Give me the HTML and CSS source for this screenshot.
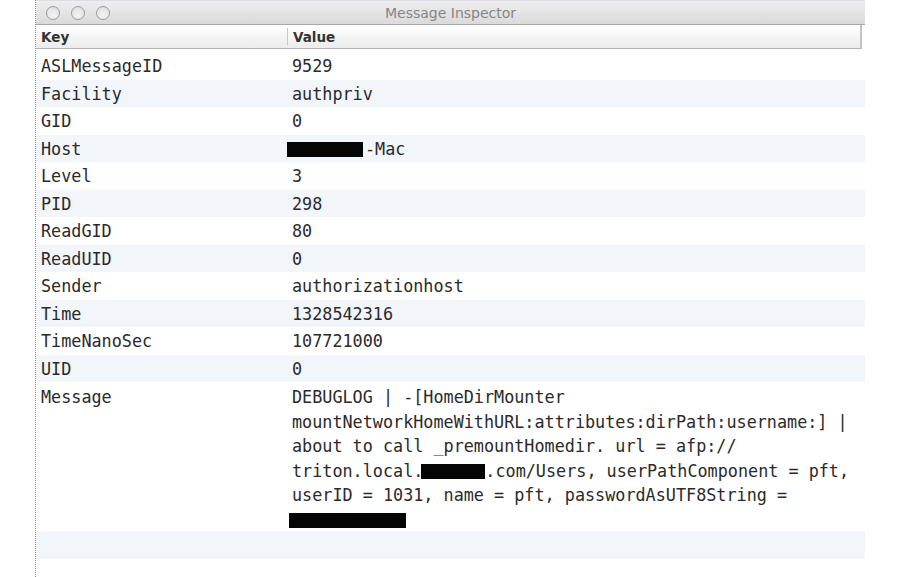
FILE: index.html
```html
<!DOCTYPE html>
<html>
<head>
<meta charset="utf-8">
<link rel="stylesheet" href="styles.css">
</head>
<body>
<div class="window">
  <div class="titlebar">
    <div class="lights">
      <span class="light"></span><span class="light"></span><span class="light"></span>
    </div>
    <div class="title">Message Inspector</div>
  </div>
  <div class="header">
    <div class="hcell key">Key</div>
    <div class="hcell value">Value</div>
  </div>
  <div class="rows">
    <div class="row"><div class="k">ASLMessageID</div><div class="v">9529</div></div>
    <div class="row alt"><div class="k">Facility</div><div class="v">authpriv</div></div>
    <div class="row"><div class="k">GID</div><div class="v">0</div></div>
    <div class="row alt"><div class="k">Host</div><div class="v"><span class="redact r-host"></span>-Mac</div></div>
    <div class="row"><div class="k">Level</div><div class="v">3</div></div>
    <div class="row alt"><div class="k">PID</div><div class="v">298</div></div>
    <div class="row"><div class="k">ReadGID</div><div class="v">80</div></div>
    <div class="row alt"><div class="k">ReadUID</div><div class="v">0</div></div>
    <div class="row"><div class="k">Sender</div><div class="v">authorizationhost</div></div>
    <div class="row alt"><div class="k">Time</div><div class="v">1328542316</div></div>
    <div class="row"><div class="k">TimeNanoSec</div><div class="v">107721000</div></div>
    <div class="row alt"><div class="k">UID</div><div class="v">0</div></div>
    <div class="row msg"><div class="k">Message</div><div class="v">DEBUGLOG | -[HomeDirMounter<br>mountNetworkHomeWithURL:attributes:dirPath:username:] |<br>about to call _premountHomedir. url = afp://<br>triton.local.<span class="redact r-dom"></span>.com/Users, userPathComponent = pft,<br>userID = 1031, name = pft, passwordAsUTF8String =<br><span class="redact r-pw"></span></div></div>
    <div class="row alt"><div class="k"></div><div class="v"></div></div>
  </div>
</div>
</body>
</html>
```
FILE: styles.css
```css
html, body {
  margin: 0;
  padding: 0;
  background: #ffffff;
}
body {
  width: 900px;
  height: 577px;
  overflow: hidden;
}
.window {
  margin-left: 35px;
  width: 830px;
  height: 577px;
  border-left: 1px dotted #8a8a8a;
  box-sizing: border-box;
}
.titlebar {
  height: 25px;
  background: linear-gradient(#eeeeee, #dadada);
  border-bottom: 1px solid #a8a8a8;
  border-top: 1px solid #dcdce4;
  box-sizing: border-box;
  display: flex;
  align-items: center;
  position: relative;
}
.lights {
  display: flex;
  gap: 11px;
  padding-left: 10px;
}
.light {
  width: 14px;
  height: 14px;
  border-radius: 50%;
  box-sizing: border-box;
  border: 1.5px solid #9c9c9c;
  background: radial-gradient(circle at 50% 70%, #f4f4f4, #dcdcdc);
}
.title {
  position: absolute;
  left: 0;
  right: 0;
  text-align: center;
  font-family: "DejaVu Sans", sans-serif;
  font-size: 14px;
  color: #858585;
  top: 4px;
}
.header {
  height: 24px;
  display: flex;
  background: linear-gradient(#ffffff, #ececec);
  border-bottom: 1px solid #b4b4b4;
  border-right: 2px solid #c4c4c4;
  box-sizing: border-box;
  margin-right: 3px;
  font-family: "DejaVu Sans", sans-serif;
  font-weight: bold;
  font-size: 13.5px;
  color: #333333;
}
.hcell {
  display: flex;
  align-items: center;
  padding-left: 5px;
  box-sizing: border-box;
}
.hcell.key {
  width: 251px;
}
.hcell.value {
  flex: 1;
  border-left: 1px solid #c8c8c8;
  margin: 3px 0;
}
.rows {
  padding-top: 3px;
  font-family: "DejaVu Sans Mono", monospace;
  font-size: 16.8px;
  color: #2a2a2a;
}
.row {
  display: flex;
  height: 27.5px;
  line-height: 28px;
  white-space: nowrap;
}
.row.alt {
  background: #f2f5fa;
}
.k {
  width: 251px;
  padding-left: 5px;
  box-sizing: border-box;
}
.v {
  flex: 1;
  padding-left: 5px;
}
.row.msg {
  height: 149px;
  line-height: 24.6px;
  padding-top: 3px;
  box-sizing: border-box;
}
.row.msg .k {
  line-height: 24.6px;
}
.redact {
  display: inline-block;
  background: #050505;
  height: 15px;
  vertical-align: -2px;
}
.r-host {
  width: 76px;
  margin-left: -5px;
  margin-right: 2px;
}
.r-dom {
  width: 64px;
  margin-left: -2px;
}
.r-pw {
  width: 117px;
  margin-left: -3px;
}
```
